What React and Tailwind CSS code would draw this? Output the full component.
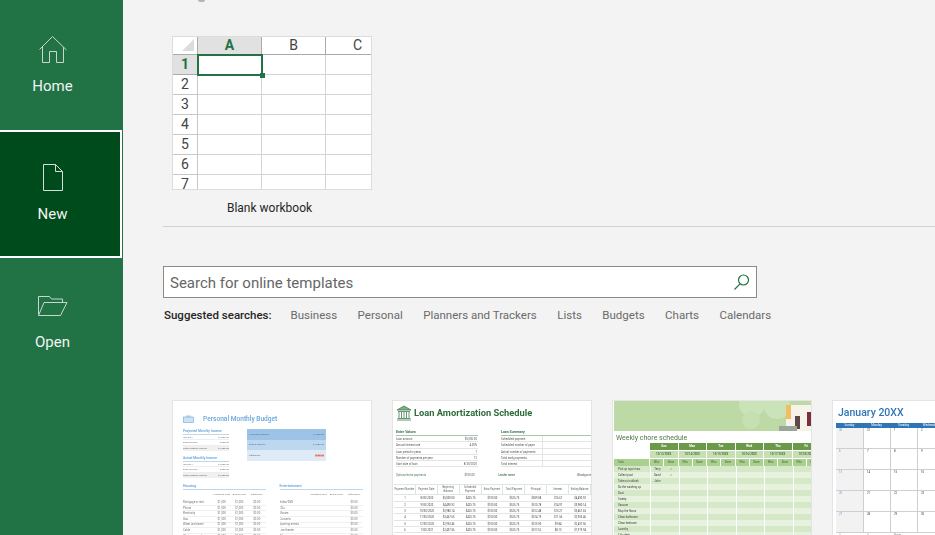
const SUGGESTED = ['Business', 'Personal', 'Planners and Trackers', 'Lists', 'Budgets', 'Charts', 'Calendars'];

function HomeIcon() {
  return (
    <svg width="30" height="30" viewBox="0 0 30 30" fill="none" stroke="#c9d6ce" strokeWidth="1">
      <path d="M1.500 14.500 14.500 1.500 28.500 15" />
      <path d="M4.500 12v15.500h7v-11h7v11h7V12" />
    </svg>
  );
}

function PageIcon() {
  return (
    <svg width="24" height="30" viewBox="0 0 24 30" fill="none" stroke="#d5dfd8" strokeWidth="1">
      <path d="M2.500 1.500h12l7 7v19h-19z" />
      <path d="M14.500 1.500v7h7" />
    </svg>
  );
}

function FolderIcon() {
  return (
    <svg width="32" height="24" viewBox="0 0 32 24" fill="none" stroke="#c9d6ce" strokeWidth="1">
      <path d="M1.500 20.500V2.500h11l2 2.500h11v4" />
      <path d="M1.500 21.500h22l6.500-13h-23z" />
    </svg>
  );
}

function NavItem({ icon, label, active }) {
  return (
    <div
      className={
        active
          ? 'h-[128px] w-[122px] pr-[15px] flex flex-col items-center justify-center bg-[#004b1c] border-2 border-l-0 border-white'
          : 'h-[128px] w-[122px] pr-[17px] flex flex-col items-center justify-center'
      }
    >
      <div className="h-[30px] flex items-center justify-center">{icon}</div>
      <div className="mt-[10px] text-[15px] leading-[22px] text-[#f0f5f2]">{label}</div>
    </div>
  );
}

function BlankSheet() {
  const rows = [1, 2, 3, 4, 5, 6, 7];
  const cell = 'border-r border-b border-[#d4d4d4] bg-white';
  return (
    <div className="w-[200px] h-[154px] overflow-hidden border border-[#dcdcdc] bg-white">
      <div className="grid grid-cols-[25px_64px_64px_1fr] grid-rows-[18px_repeat(7,20px)] text-[14px]">
        <div className="bg-white border-b border-r border-[#ababab] flex items-end justify-end pr-[3px] pb-[3px]">
          <div className="w-0 h-0 border-l-[12px] border-l-transparent border-b-[12px] border-b-[#dcdcdc]" />
        </div>
        <div className="bg-[#e1e1e1] border-b border-r border-[#ababab] flex items-center justify-center font-bold text-[#217346]">A</div>
        <div className="bg-white border-b border-r border-[#ababab] flex items-center justify-center text-[#444]">B</div>
        <div className="bg-white border-b border-[#ababab] flex items-center justify-center pl-[18px] text-[#444]">C</div>
        {rows.map((r) => (
          <div key={r} className="contents">
            <div
              className={
                r === 1
                  ? 'bg-[#e1e1e1] border-r border-b border-[#ababab] flex items-center justify-center font-bold text-[#217346]'
                  : 'bg-white border-r border-b border-[#c8c8c8] flex items-center justify-center text-[#444]'
              }
            >
              {r}
            </div>
            {r === 1 ? (
              <div className="relative bg-white border-2 border-[#217346] -ml-px -mt-px -mr-px -mb-px">
                <div className="absolute -right-[4px] -bottom-[4px] w-[5px] h-[5px] bg-[#217346]" />
              </div>
            ) : (
              <div className={cell} />
            )}
            <div className={cell} />
            <div className="border-b border-[#d4d4d4] bg-white" />
          </div>
        ))}
      </div>
    </div>
  );
}

function Thumb({ children }) {
  return (
    <div className="w-[200px] h-[135px] shrink-0 bg-white border border-[#e4e4e4] border-b-0 overflow-hidden">
      {children}
    </div>
  );
}

const BUDGET_ROWS = ['Mortgage or rent', 'Phone', 'Electricity', 'Gas', 'Water and sewer', 'Cable', 'Waste removal'];
const ENT_ROWS = ['Video/DVD', 'CDs', 'Movies', 'Concerts', 'Sporting events', 'Live theater', 'Other'];

function MiniRows({ rows, cols }) {
  return (
    <div className="mt-[1px]">
      {rows.map((r) => (
        <div key={r} className="flex h-[5.600px] items-center border-b border-[#eef0f2] text-[2.800px] leading-[5px] text-[#777]">
          <div className="w-[30px] truncate">{r}</div>
          {cols.map((c, i) => (
            <div key={i} className="flex-1 text-center">{c}</div>
          ))}
        </div>
      ))}
    </div>
  );
}

function IncomeBlock({ title }) {
  return (
    <div className="w-[46px]">
      <div className="text-[3.300px] leading-[5px] font-medium text-[#5b9bd5] border-b border-[#bcd7ee]">{title}</div>
      <div className="flex justify-between h-[5.300px] text-[2.500px] leading-[5px] text-[#777] border-b border-[#eee]"><span>Income 1</span><span>$4,000.00</span></div>
      <div className="flex justify-between h-[5.300px] text-[2.500px] leading-[5px] text-[#777] border-b border-[#eee]"><span>Extra income</span><span>$300.00</span></div>
      <div className="flex justify-between h-[5.500px] bg-[#f0f0f0] text-[2.500px] leading-[5.500px] text-[#666]"><span>Total monthly income</span><span>$4,300.00</span></div>
    </div>
  );
}

function HeadRow() {
  return (
    <div className="flex h-[9px] text-[2.500px] leading-[3px] text-[#777] items-center text-center">
      <div className="w-[30px]" />
      <div className="flex-1">Projected Cost</div>
      <div className="flex-1">Actual Cost</div>
      <div className="flex-1">Difference</div>
    </div>
  );
}

function BudgetThumb() {
  return (
    <div className="blur-[0.35px] pl-[10px] pr-[8px] pt-[13px]">
      <div className="flex items-center h-[10px]">
        <svg width="11" height="8" viewBox="0 0 11 8" className="mr-[9px]">
          <rect x="0.500" y="2" width="10" height="5.500" fill="#cfe2f3" stroke="#7fb2de" strokeWidth="0.700" />
          <rect x="3" y="0.500" width="5" height="2" fill="#a9cbe9" />
        </svg>
        <span className="text-[6.600px] leading-[10px] font-medium text-[#6ba7dd] whitespace-nowrap">Personal Monthly Budget</span>
      </div>
      <div className="flex mt-[5px]">
        <div className="flex flex-col gap-[5px]">
          <IncomeBlock title="Projected Monthly Income" />
          <IncomeBlock title="Actual Monthly Income" />
        </div>
        <div className="ml-[18px] w-[79px] h-[32px] flex flex-col text-[2.500px] text-[#56708a]">
          <div className="h-[11px] bg-[#9dc3e6] px-[2px] flex items-center justify-between"><span>Projected balance</span><span>$1,300.00</span></div>
          <div className="h-[10px] bg-[#bdd7ee] px-[2px] flex items-center justify-between"><span>Actual balance</span><span>$1,500.00</span></div>
          <div className="h-[11px] bg-[#deebf7] px-[2px] flex items-center justify-between"><span>Difference</span><span className="bg-[#f5b7b1] text-[#c0392b]">$200.00</span></div>
        </div>
      </div>
      <div className="flex gap-[14px] mt-[6px]">
        <div className="w-[83px]">
          <div className="text-[3.500px] leading-[5px] font-medium text-[#5b9bd5] border-b border-[#bcd7ee]">Housing</div>
          <HeadRow />
          <MiniRows rows={BUDGET_ROWS} cols={['$1,000', '$1,000', '$0.00']} />
        </div>
        <div className="w-[84px]">
          <div className="text-[3.500px] leading-[5px] font-medium text-[#5b9bd5] border-b border-[#bcd7ee]">Entertainment</div>
          <HeadRow />
          <MiniRows rows={ENT_ROWS} cols={['', '', '$0.00']} />
        </div>
      </div>
    </div>
  );
}

const LOAN_VALUES = [
  ['Loan amount', '$5,000.00'],
  ['Annual interest rate', '4.00%'],
  ['Loan period in years', '1'],
  ['Number of payments per year', '12'],
  ['Start date of loan', '8/30/2020'],
];
const LOAN_SUMMARY = ['Scheduled payment', 'Scheduled number of paym', 'Actual number of payments', 'Total early payments', 'Total interest'];
const LOAN_HEAD = ['Payment Number', 'Payment Date', 'Beginning Balance', 'Scheduled Payment', 'Extra Payment', 'Total Payment', 'Principal', 'Interest', 'Ending Balance'];
const LOAN_ROWS = [
  ['1', '8/30/2020', '$5,000.00', '$425.75', '$100.00', '$525.75', '$509.08', '$16.67', '$4,490.92'],
  ['2', '9/30/2020', '$4,490.92', '$425.75', '$100.00', '$525.75', '$510.78', '$14.97', '$3,980.14'],
  ['3', '10/30/2020', '$3,980.14', '$425.75', '$100.00', '$525.75', '$512.48', '$13.27', '$3,467.65'],
  ['4', '11/30/2020', '$3,467.65', '$425.75', '$100.00', '$525.75', '$514.19', '$11.56', '$2,953.46'],
  ['5', '12/30/2020', '$2,953.46', '$425.75', '$100.00', '$525.75', '$515.90', '$9.84', '$2,437.56'],
  ['6', '1/30/2021', '$2,437.56', '$425.75', '$100.00', '$525.75', '$517.62', '$8.13', '$1,919.94'],
];

function LoanThumb() {
  return (
    <div className="blur-[0.25px]">
      <div className="flex items-center pl-[3px] pt-[3px] h-[21px]">
        <svg width="16" height="16" viewBox="0 0 16 16" fill="none" stroke="#3f7f4f" strokeWidth="0.800">
          <path d="M8 1 1 5h14z" fill="#7fae88" />
          <path d="M2 6.500h12M3 7v6M5.500 7v6M8 7v6M10.500 7v6M13 7v6M1.500 13.500h13M1 15h14" />
        </svg>
        <span className="ml-[2px] text-[9.300px] leading-[14px] font-bold text-[#2f6b3b] whitespace-nowrap">Loan Amortization Schedule</span>
      </div>
      <div className="flex mt-[7px] pl-[3px]">
        <div className="w-[82px]">
          <div className="text-[3.500px] leading-[6px] font-bold text-[#3f6f4a] border-b border-[#a8c6ae]">Enter Values</div>
          {LOAN_VALUES.map(([k, v]) => (
            <div key={k} className="flex justify-between pr-[1px] h-[6.300px] text-[2.800px] leading-[6px] text-[#555] border-b border-[#e4e4e4]"><span>{k}</span><span>{v}</span></div>
          ))}
        </div>
        <div className="ml-[23px] flex-1">
          <div className="text-[3.500px] leading-[6px] font-bold text-[#3f6f4a] border-b border-[#a8c6ae]">Loan Summary</div>
          {LOAN_SUMMARY.map((k) => (
            <div key={k} className="h-[6.300px] text-[2.800px] leading-[6px] text-[#555] border-b border-[#e4e4e4] overflow-hidden whitespace-nowrap"><span className="inline-block w-[42px] overflow-hidden border-r border-[#e4e4e4]">{k}</span></div>
          ))}
        </div>
      </div>
      <div className="flex h-[6px] mt-[5px] pl-[3px] text-[2.800px] leading-[6px] whitespace-nowrap">
        <span className="w-[81px] flex justify-between text-[#4d7f5a]">Optional extra payments<span className="text-[#555]">$100.00</span></span>
        <span className="ml-[24px] text-[#4d7f5a] font-semibold">Lender name</span>
        <span className="ml-[62px] text-[#555]">Woodgrove</span>
      </div>
      <div className="mt-[6px] grid grid-cols-9 pl-[1px] text-center">
        {LOAN_HEAD.map((h) => (
          <div key={h} className="h-[11px] flex items-center justify-center border-y border-r border-[#dfe6e0] text-[2.600px] leading-[4px] text-[#666]">{h}</div>
        ))}
        {LOAN_ROWS.map((row) =>
          row.map((c, i) => (
            <div key={row[0] + i} className="h-[6.300px] border-b border-[#e4e4e4] text-[2.700px] leading-[6px] text-[#444]">{c}</div>
          ))
        )}
      </div>
    </div>
  );
}

const DAYS = [['Sun', '10/13/20XX'], ['Mon', '10/14/20XX'], ['Tue', '10/15/20XX'], ['Wed', '10/16/20XX'], ['Thu', '10/17/20XX'], ['Fri', '10/18/20XX']];
const CHORES = [
  ['Pick up toys/misc', 'Terry', '✓'],
  ['Collect post', 'David', '✓'],
  ['Take out rubbish', 'John', ''],
  ['Do the washing up', '', ''],
  ['Dust', '', ''],
  ['Sweep', '', ''],
  ['Vacuum', '', ''],
  ['Mop the floors', '', ''],
  ['Clean bathroom', '', ''],
  ['Clean bedroom', '', ''],
  ['Laundry', '', ''],
  ['Tidy desk', '', ''],
];

function ChoreThumb() {
  return (
    <div className="pl-px blur-[0.25px]">
      <div className="relative h-[30px] bg-[#bddaa6] overflow-hidden">
        <div className="absolute left-[125px] -top-[10px] w-[26px] h-[26px] rounded-full bg-[#cbe3b8]" />
        <div className="absolute left-[150px] -top-[8px] w-[26px] h-[26px] rounded-full bg-[#cbe3b8]" />
        <div className="absolute left-[128px] top-[10px] w-[18px] h-[18px] rounded-full bg-[#c6e0b1]" />
        <div className="absolute left-[172px] top-[4px] w-[28px] h-[26px] bg-[#f7f3ea]" />
        <div className="absolute left-[172px] top-[4px] w-[5px] h-[14px] bg-[#f0c060]" />
        <div className="absolute left-[181px] top-[15px] w-[5px] h-[13px] bg-[#5d4a44]" />
        <div className="absolute left-[193px] top-[11px] w-[6px] h-[14px] bg-[#7a2f3a]" />
        <div className="absolute left-[165px] top-[25px] w-[18px] h-[5px] bg-[#9aa697]" />
      </div>
      <div className="h-[12px] pl-[2px] text-[7px] leading-[14px] text-[#55784a] whitespace-nowrap">Weekly chore schedule</div>
      <div className="flex gap-[1px]">
        <div className="w-[35px] shrink-0 flex flex-col justify-end">
          <div className="h-[7px] bg-[#a9d08e] pl-[4px] text-[2.800px] leading-[7px] text-[#4a6a3a]">Task</div>
        </div>
        {DAYS.map(([d, date]) => (
          <div key={d} className="w-[27.500px] shrink-0 text-center">
            <div className="h-[7px] mb-px bg-[#6a9a48] text-[3px] leading-[7px] font-bold text-white">{d}</div>
            <div className="h-[7px] mb-px bg-[#c6e0b4] text-[2.800px] leading-[7px] font-semibold text-[#4a6a3a]">{date}</div>
            <div className="h-[7px] flex gap-px text-[2.800px] leading-[7px] text-[#4a6a3a]">
              <div className="flex-1 bg-[#a9d08e]">Who</div>
              <div className="flex-1 bg-[#a9d08e]">Done</div>
            </div>
          </div>
        ))}
      </div>
      {CHORES.map(([task, who, done], i) => (
        <div key={task} className={i % 2 === 0 ? 'flex gap-[1px] h-[6px] bg-[#d5e8c8]' : 'flex gap-[1px] h-[6px] bg-[#e6f1de]'}>
          <div className="w-[35px] shrink-0 pl-[4px] text-[2.800px] leading-[6px] text-[#444]">{task}</div>
          {DAYS.map(([d], j) => (
            <div key={d} className="w-[27.500px] shrink-0 flex gap-px border-l border-white text-center text-[2.800px] leading-[6px] text-[#444]">
              <div className="flex-1">{j === 0 ? who : ''}</div>
              <div className="flex-1 text-[#3f6f2a]">{j === 0 ? done : ''}</div>
            </div>
          ))}
        </div>
      ))}
    </div>
  );
}

const CAL_HEAD = ['Sunday', 'Monday', 'Tuesday', 'Wednesday'];
const CAL_ROWS = [
  ['30', '31', '1', '2'],
  ['6', '7', '8', '9'],
  ['13', '14', '15', '16'],
  ['20', '21', '22', '23'],
  ['27', '28', '29', '30'],
];

function CalendarThumb() {
  return (
    <div className="pl-[3px] blur-[0.2px]">
      <div className="h-[19px] mt-[2px] pl-[2px] text-[10.500px] leading-[19px] font-medium text-[#2e75b6] whitespace-nowrap">January 20XX</div>
      <div className="mt-[1px] flex h-[5px] w-[200px] bg-[#2e75b6] text-center text-[3px] leading-[5px] text-white">
        {CAL_HEAD.map((h) => (
          <div key={h} className="w-[27px] shrink-0">{h}</div>
        ))}
      </div>
      {CAL_ROWS.map((row) => (
        <div key={row[0]} className="flex h-[21px] border-b border-[#cfcfcf]">
          {row.map((c, i) => (
            <div
              key={i}
              className={
                i === 0
                  ? 'w-[28px] shrink-0 bg-[#f2f2f2] border-r border-[#cfcfcf] pl-[3px] text-[2.800px] leading-[5px] text-[#5b9bd5]'
                  : 'w-[27px] shrink-0 border-r border-[#cfcfcf] pl-[3px] text-[2.800px] leading-[5px] text-[#333]'
              }
            >
              {c}
            </div>
          ))}
        </div>
      ))}
      <div className="flex h-[6px] text-[2.800px] leading-[5px] text-[#888]">
        <div className="w-[28px] pl-[3px]">3</div>
        <div className="w-[27px] pl-[3px]">4</div>
        <div className="pl-[3px]">Notes</div>
      </div>
    </div>
  );
}

export default function App() {
  return (
    <div className="flex h-[535px] w-[935px] overflow-hidden bg-[#f3f3f3] font-['Roboto','Noto_Sans',sans-serif]">
      <aside className="w-[123px] shrink-0 bg-[#217346] pt-[2px]">
        <NavItem icon={<HomeIcon />} label="Home" />
        <NavItem icon={<PageIcon />} label="New" active />
        <NavItem icon={<FolderIcon />} label="Open" />
      </aside>

      <main className="flex-1 min-w-0 pl-[40px]">
        <div className="pl-[9px]">
          <div className="h-[2px] w-[7px] ml-[26px] bg-[#b5b5b5] rounded-b-full" />
          <div className="mt-[34px]">
            <BlankSheet />
          </div>
          <div className="w-[200px] mt-[9px] pr-[5px] text-center text-[12px] leading-[18px] text-[#262626]">Blank workbook</div>
        </div>

        <div className="mt-[9px] h-px bg-[#d2d2d2]" />

        <div className="mt-[39px] w-[594px] h-[32px] flex items-center justify-between bg-white border border-[#8a8a8a] pl-[6px] pr-[5px]">
          <span className="text-[15px] leading-[32px] pt-px text-[#666]">Search for online templates</span>
          <svg width="18" height="18" viewBox="0 0 18 18" fill="none" stroke="#217346" strokeWidth="1.200">
            <circle cx="10.500" cy="7" r="5" />
            <path d="M7 10.800 1.500 16.500" />
          </svg>
        </div>

        <div className="mt-[9px] pl-px flex items-center h-[18px] text-[11.500px] whitespace-nowrap">
          <span className="font-medium text-[#262626] mr-[19px]">Suggested searches:</span>
          <div className="flex gap-[20.500px] text-[#6a6a6a]">
            {SUGGESTED.map((s) => (
              <span key={s}>{s}</span>
            ))}
          </div>
        </div>

        <div className="mt-[75px] pl-[9px] flex gap-[20px]">
          <Thumb><BudgetThumb /></Thumb>
          <Thumb><LoanThumb /></Thumb>
          <Thumb><ChoreThumb /></Thumb>
          <Thumb><CalendarThumb /></Thumb>
        </div>
      </main>
    </div>
  );
}
